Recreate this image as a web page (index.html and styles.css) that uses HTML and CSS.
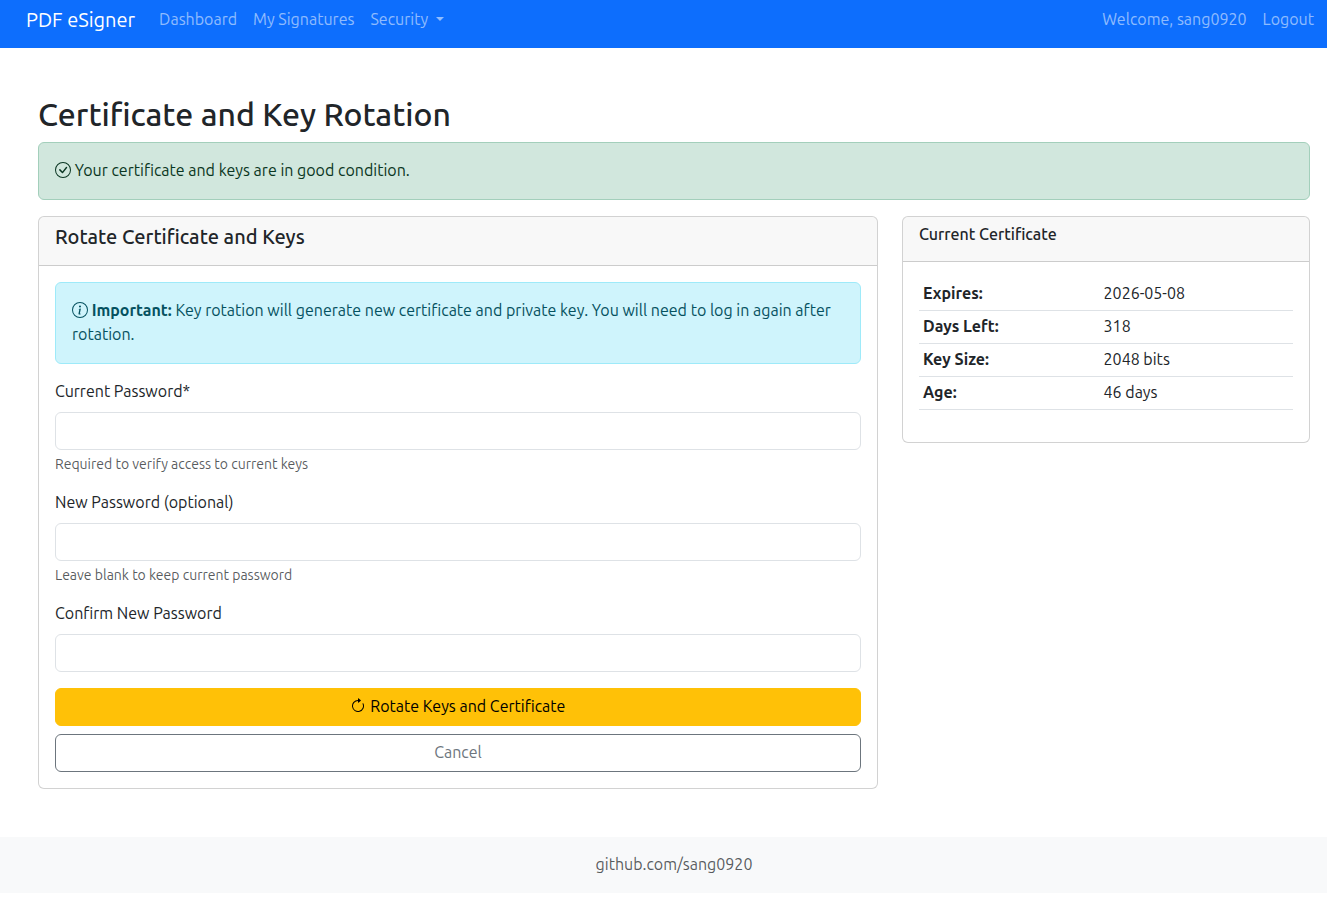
FILE: index.html
```
<!DOCTYPE html>
<html lang="en">
<head>
<meta charset="utf-8">
<title>PDF eSigner - Certificate and Key Rotation</title>
<link rel="stylesheet" href="styles.css">
</head>
<body>
<nav class="navbar">
  <a class="brand">PDF eSigner</a>
  <div class="nav">
    <a class="nav-link">Dashboard</a>
    <a class="nav-link">My Signatures</a>
    <a class="nav-link dropdown">
      Security
    </a>
  </div>
  <div class="nav nav-end">
    <span class="nav-link">Welcome, sang0920</span>
    <a class="nav-link">Logout</a>
  </div>
</nav>

<main class="main">
  <h2 class="page-title">Certificate and Key Rotation</h2>
  <div class="alert alert-success">
    <svg class="icon" viewBox="0 0 16 16"><path d="M8 15A7 7 0 1 1 8 1a7 7 0 0 1 0 14m0 1A8 8 0 1 0 8 0a8 8 0 0 0 0 16"/><path d="m10.97 4.97-.02.022-3.473 4.425-2.093-2.094a.75.75 0 0 0-1.06 1.06L6.97 11.03a.75.75 0 0 0 1.079-.02l3.992-4.99a.75.75 0 0 0-1.071-1.05"/></svg>
    Your certificate and keys are in good condition.
  </div>

  <div class="columns">
    <section class="card">
      <header class="card-header"><h5 class="title-lg">Rotate Certificate and Keys</h5></header>
      <div class="card-body">
        <div class="alert alert-info">
          <svg class="icon" viewBox="0 0 16 16"><path d="M8 15A7 7 0 1 1 8 1a7 7 0 0 1 0 14m0 1A8 8 0 1 0 8 0a8 8 0 0 0 0 16"/><path d="m8.93 6.588-2.29.287-.082.38.45.083c.294.07.352.176.288.469l-.738 3.468c-.194.897.105 1.319.808 1.319.545 0 1.178-.252 1.465-.598l.088-.416c-.2.176-.492.246-.686.246-.275 0-.375-.193-.304-.533zM9 4.5a1 1 0 1 1-2 0 1 1 0 0 1 2 0"/></svg>
          <strong>Important:</strong> Key rotation will generate new certificate and private key. You will need to log in again after rotation.
        </div>
        <form>
          <div class="field">
            <label class="label" for="current">Current Password*</label>
            <input class="input" type="password" id="current">
            <div class="hint">Required to verify access to current keys</div>
          </div>
          <div class="field">
            <label class="label" for="new">New Password (optional)</label>
            <input class="input" type="password" id="new">
            <div class="hint">Leave blank to keep current password</div>
          </div>
          <div class="field">
            <label class="label" for="confirm">Confirm New Password</label>
            <input class="input" type="password" id="confirm">
          </div>
          <div class="actions">
            <button class="btn btn-warning" type="button"><svg class="icon" viewBox="0 0 16 16"><path fill-rule="evenodd" d="M8 3a5 5 0 1 0 4.546 2.914.5.5 0 0 1 .908-.417A6 6 0 1 1 8 2z"/><path d="M8 4.466V.534a.25.25 0 0 1 .41-.192l2.36 1.966c.12.1.12.284 0 .384L8.41 4.658A.25.25 0 0 1 8 4.466"/></svg> Rotate Keys and Certificate</button>
            <a class="btn btn-outline">Cancel</a>
          </div>
        </form>
      </div>
    </section>

    <section class="card">
      <header class="card-header"><h6 class="title-sm">Current Certificate</h6></header>
      <div class="card-body">
        <table class="table">
          <tr><td class="key">Expires:</td><td>2026-05-08</td></tr>
          <tr><td class="key">Days Left:</td><td>318</td></tr>
          <tr><td class="key">Key Size:</td><td>2048 bits</td></tr>
          <tr><td class="key">Age:</td><td>46 days</td></tr>
        </table>
      </div>
    </section>
  </div>
</main>

<footer class="footer">github.com/sang0920</footer>
</body>
</html>
```

FILE: styles.css
```
*, *::before, *::after { box-sizing: border-box; }

body {
  margin: 0;
  background: #fff;
  color: #212529;
  font-family: Ubuntu, "Noto Sans", sans-serif;
  font-size: 16px;
  line-height: 1.5;
}

.navbar {
  display: flex;
  align-items: center;
  height: 48px;
  padding: 0 5px 8px 26px;
  background: #0d6efd;
}
.brand {
  margin-right: 16px;
  color: #fff;
  font-size: 20px;
}
.nav { display: flex; }
.nav-end { margin-left: auto; }
.nav-link {
  padding: 7px 8px 9px;
  color: rgba(255, 255, 255, .55);
}
.dropdown::after {
  content: "";
  display: inline-block;
  margin-left: 4.08px;
  vertical-align: 4.08px;
  border-top: 4.8px solid;
  border-right: 4.8px solid transparent;
  border-left: 4.8px solid transparent;
}

.main { padding: 47px 17px 0 38px; }
.page-title {
  margin: 0 0 9px;
  font-size: 32px;
  font-weight: 500;
  line-height: 1.2;
}

.icon {
  width: 16px;
  height: 16px;
  fill: currentColor;
  vertical-align: -2px;
}

.alert {
  margin-bottom: 16px;
  padding: 15px 16px 17px;
  border: 1px solid;
  border-radius: 6px;
}
.alert-success {
  background: #d1e7dd;
  border-color: #a3cfbb;
  color: #0a3622;
}
.alert-info {
  background: #cff4fc;
  border-color: #9eeaf9;
  color: #055160;
}

.columns {
  display: grid;
  grid-template-columns: 840px 408px;
  gap: 24px;
  align-items: start;
}
.card {
  border: 1px solid rgba(0, 0, 0, .176);
  border-radius: 6px;
  background: #fff;
}
.card-header {
  padding: 8px 16px;
  border-bottom: 1px solid rgba(0, 0, 0, .176);
  border-radius: 5px 5px 0 0;
  background: rgba(33, 37, 41, .03);
}
.title-lg, .title-sm {
  margin: 0 0 8px;
  font-weight: 500;
  line-height: 1.2;
}
.title-lg { font-size: 20px; }
.title-sm { font-size: 16px; }
.card-body { padding: 16px; }
strong { font-weight: 700; }

.field { margin-bottom: 16px; }
.label {
  display: block;
  margin: -1px 0 9px;
}
.field { display: flow-root; }
.input {
  display: block;
  width: 100%;
  height: 38px;
  padding: 6px 12px;
  border: 1px solid #dee2e6;
  border-radius: 6px;
  background: #fff;
  font: inherit;
}
.hint {
  margin-top: 4px;
  color: rgba(33, 37, 41, .75);
  font-size: 14px;
}

.actions {
  display: grid;
  gap: 8px;
}
.btn {
  padding: 5px 12px 7px;
  border: 1px solid;
  border-radius: 6px;
  font: inherit;
  text-align: center;
}
.btn-warning {
  background: #ffc107;
  border-color: #ffc107;
  color: #000;
}
.btn-warning .icon { margin: 0 .3px 0 -.3px; }
.btn-outline {
  border-color: #6c757d;
  color: #6c757d;
}

.table {
  width: 100%;
  margin-bottom: 16px;
  border-collapse: collapse;
}
.table td {
  padding: 3px 4px 5px;
  border-bottom: 1px solid #dee2e6;
}
.table .key {
  width: 180.6px;
  font-weight: 700;
}

.footer {
  margin-top: 48px;
  padding: 15px 0 17px 21px;
  background: #f8f9fa;
  color: rgba(33, 37, 41, .75);
  text-align: center;
}
```
